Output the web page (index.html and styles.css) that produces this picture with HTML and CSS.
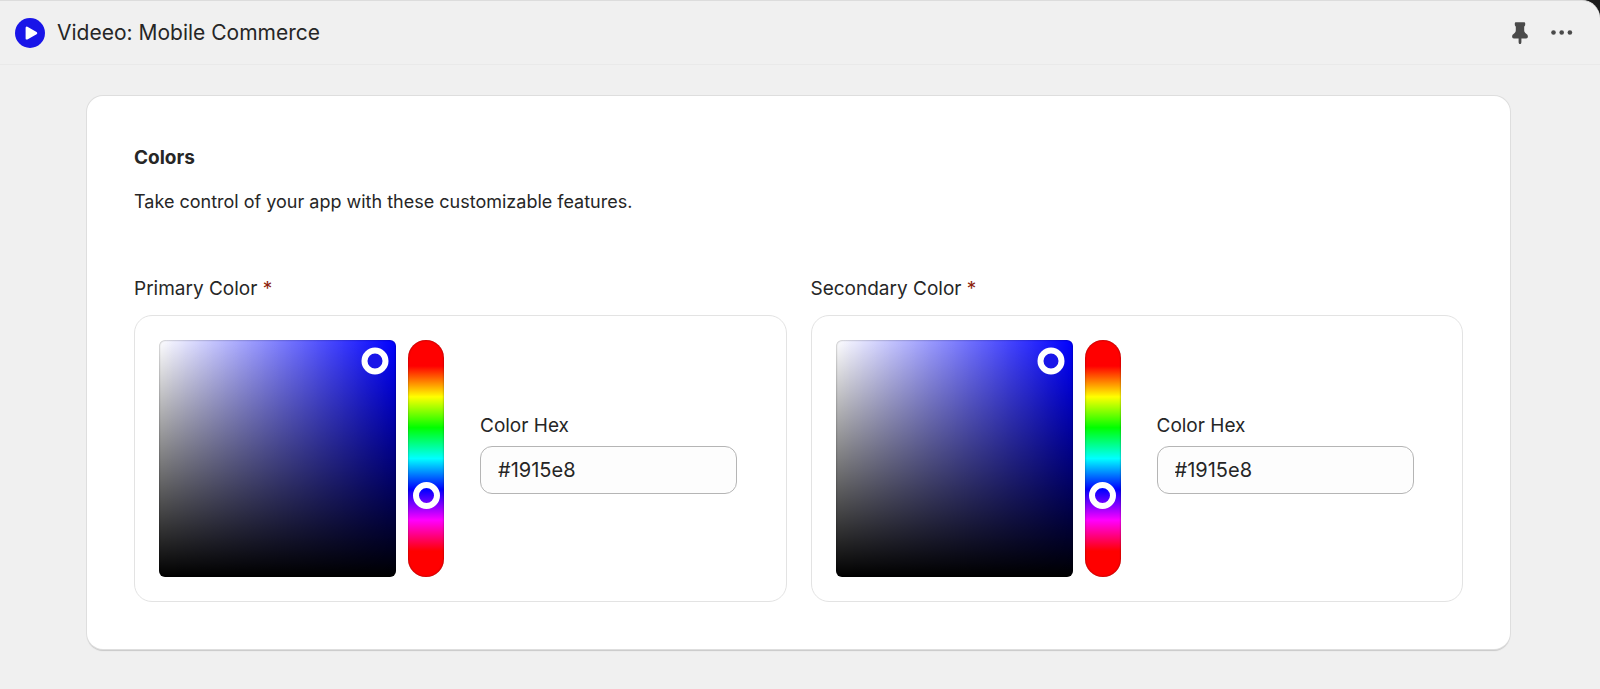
FILE: index.html
```html
<!DOCTYPE html>
<html lang="en">
<head>
<meta charset="utf-8">
<meta name="viewport" content="width=device-width, initial-scale=1">
<title>Videeo: Mobile Commerce</title>
<link rel="stylesheet" href="styles.css">
</head>
<body>
<div class="frame">
  <header class="topbar">
    <svg class="logo" viewBox="0 0 30 30" aria-hidden="true">
      <circle cx="15" cy="15" r="15" fill="#1915e8"/>
      <path d="M11.800 9.800v10.600l9.200-5.300z" fill="#fff" stroke="#fff" stroke-width="2.400" stroke-linejoin="round"/>
    </svg>
    <h1 class="app-name">Videeo: Mobile Commerce</h1>
    <div class="actions">
      <button class="icon-button" type="button" aria-label="Pin app">
        <svg viewBox="0 0 24 24" aria-hidden="true">
          <path d="M8.200 1.300h7.600c.9 0 1.400.5 1.400 1.300v1.200c0 .8-.5 1.300-1 1.800v3.600c0 1.500.5 2.400 1.700 3.200 1.300.9 2 1.700 2 3.100 0 1.300-.7 1.900-1.800 1.900h-4.700v3.500c0 1.200-.5 2.100-1.400 2.100s-1.400-.9-1.400-2.100v-3.500H5.900c-1.100 0-1.800-.6-1.800-1.900 0-1.400.7-2.200 2-3.100 1.200-.8 1.700-1.700 1.700-3.200V5.600c-.5-.5-1-1-1-1.800V2.600c0-.8.5-1.300 1.400-1.300z" fill="#4a4a4a"/>
        </svg>
      </button>
      <button class="icon-button" type="button" aria-label="More actions">
        <svg viewBox="0 0 24 24" aria-hidden="true">
          <g fill="#4a4a4a"><circle cx="3.500" cy="11.500" r="2.300"/><circle cx="11.700" cy="11.500" r="2.300"/><circle cx="19.900" cy="11.500" r="2.300"/></g>
        </svg>
      </button>
    </div>
  </header>
  <main class="page">
    <section class="card">
      <h2 class="card-title">Colors</h2>
      <p class="card-text">Take control of your app with these customizable features.</p>
      <div class="fields">
        <section class="field">
          <h3 class="field-label">Primary Color <span class="required">*</span></h3>
          <div class="picker">
            <div class="picker-controls">
              <div class="shade"><button class="knob" type="button" aria-label="Primary color shade"></button></div>
              <input class="hue" type="range" min="0" max="360" value="243" aria-label="Primary color hue">
            </div>
            <div class="hex">
              <label class="hex-label" for="primary-hex">Color Hex</label>
              <input class="hex-input" id="primary-hex" type="text" value="#1915e8">
            </div>
          </div>
        </section>
        <section class="field">
          <h3 class="field-label">Secondary Color <span class="required">*</span></h3>
          <div class="picker">
            <div class="picker-controls">
              <div class="shade"><button class="knob" type="button" aria-label="Secondary color shade"></button></div>
              <input class="hue" type="range" min="0" max="360" value="243" aria-label="Secondary color hue">
            </div>
            <div class="hex">
              <label class="hex-label" for="secondary-hex">Color Hex</label>
              <input class="hex-input" id="secondary-hex" type="text" value="#1915e8">
            </div>
          </div>
        </section>
      </div>
    </section>
  </main>
</div>
</body>
</html>
```
FILE: styles.css
```css
* {
  box-sizing: border-box;
}

body {
  margin: 0;
  background: #1a1a1a;
  color: #262626;
  font-family: Inter, "Liberation Sans", sans-serif;
}

h1, h2, h3, p {
  margin: 0;
  font-weight: 400;
}

.frame {
  min-height: 100vh;
  background: #f0f0f0;
  border-top: 1px solid #dcdcdc;
  border-top-right-radius: 18px;
}

.topbar {
  display: flex;
  align-items: center;
  gap: 12px;
  height: 64px;
  padding: 0 26px 0 15px;
  border-bottom: 1px solid #e9e9e9;
}

.logo {
  width: 30px;
  height: 30px;
}

.app-name {
  font-size: 21px;
  line-height: 28px;
}

.actions {
  display: flex;
  gap: 18px;
  margin-left: auto;
}

.icon-button {
  width: 24px;
  height: 24px;
  padding: 0;
  border: 0;
  background: none;
}

.icon-button svg {
  display: block;
}

.page {
  padding: 31px 90px 40px 87px;
}

.card {
  padding: 48px 47px 47px;
  background: #fff;
  border-radius: 16px;
  box-shadow: 0 0 0 1px #dedede, 0 2px 1px #c8c8c8;
}

.card-title {
  font-size: 19px;
  font-weight: 700;
  line-height: 28px;
}

.card-text {
  margin-top: 16px;
  font-size: 18px;
  line-height: 28px;
}

.fields {
  display: grid;
  grid-template-columns: 1fr 1fr;
  gap: 24px;
  margin-top: 59px;
}

.field-label {
  font-size: 19px;
  line-height: 28px;
}

.required {
  color: #8e1f0b;
}

.picker {
  display: flex;
  align-items: center;
  gap: 36px;
  margin-top: 12px;
  padding: 24px;
  border: 1px solid #e3e3e3;
  border-radius: 18px;
}

.picker-controls {
  display: flex;
  gap: 12px;
  height: 237px;
}

.shade {
  position: relative;
  width: 237px;
  border-radius: 6px;
  background:
    linear-gradient(to top, #000, transparent),
    linear-gradient(to right, #fff, transparent),
    #00f;
  box-shadow: inset 0 0 2px rgba(0, 0, 0, 0.5);
}

.knob {
  position: absolute;
  top: 9%;
  left: 91%;
  width: 27px;
  height: 27px;
  padding: 0;
  transform: translate(-50%, -50%);
  border: 6px solid #fff;
  border-radius: 50%;
  background: #1915e8;
}

.hue {
  writing-mode: vertical-lr;
  appearance: none;
  width: 36px;
  height: 100%;
  margin: 0;
  padding: 0;
  border-radius: 18px;
  background: linear-gradient(to bottom, #f00 26px, #ff0, #0f0, #0ff, #00f, #f0f, #f00 calc(100% - 26px));
  box-shadow: inset 0 0 2px rgba(0, 0, 0, 0.5);
}

.hue::-webkit-slider-thumb {
  appearance: none;
  width: 27px;
  height: 27px;
  border: 6px solid #fff;
  border-radius: 50%;
  background: transparent;
}

.hex {
  display: flex;
  flex-direction: column;
  gap: 6px;
  width: 257px;
  padding-bottom: 12px;
}

.hex-label {
  font-size: 19px;
  line-height: 28px;
}

.hex-input {
  width: 100%;
  height: 48px;
  padding: 0 17px;
  border: 1px solid #b5b5b5;
  border-radius: 12px;
  background: #fdfdfd;
  color: #262626;
  font: inherit;
  font-size: 20px;
}
```
